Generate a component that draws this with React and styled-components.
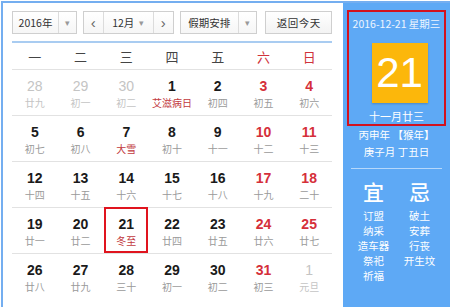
import styled, { createGlobalStyle } from "styled-components";

const GlobalStyle = createGlobalStyle`
  html, body {
    margin: 0;
    padding: 0;
    background: #fff;
  }
  body {
    padding: 1px 0 0 1px;
    font-family: "Liberation Sans", "Noto Sans CJK SC", sans-serif;
    overflow: hidden;
  }
`;

const days = [
  [
    { n: 28, l: "廿九", dim: true },
    { n: 29, l: "初一", dim: true },
    { n: 30, l: "初二", dim: true },
    { n: 1, l: "艾滋病日", fest: true },
    { n: 2, l: "初四" },
    { n: 3, l: "初五" },
    { n: 4, l: "初六" },
  ],
  [
    { n: 5, l: "初七" },
    { n: 6, l: "初八" },
    { n: 7, l: "大雪", fest: true },
    { n: 8, l: "初十" },
    { n: 9, l: "十一" },
    { n: 10, l: "十二" },
    { n: 11, l: "十三" },
  ],
  [
    { n: 12, l: "十四" },
    { n: 13, l: "十五" },
    { n: 14, l: "十六" },
    { n: 15, l: "十七" },
    { n: 16, l: "十八" },
    { n: 17, l: "十九" },
    { n: 18, l: "二十" },
  ],
  [
    { n: 19, l: "廿一" },
    { n: 20, l: "廿二" },
    { n: 21, l: "冬至", fest: true, selected: true },
    { n: 22, l: "廿四" },
    { n: 23, l: "廿五" },
    { n: 24, l: "廿六" },
    { n: 25, l: "廿七" },
  ],
  [
    { n: 26, l: "廿八" },
    { n: 27, l: "廿九" },
    { n: 28, l: "三十" },
    { n: 29, l: "初一" },
    { n: 30, l: "初二" },
    { n: 31, l: "初三" },
    { n: 1, l: "元旦", dim: true },
  ],
];

const weekdays = ["一", "二", "三", "四", "五", "六", "日"];

export default function App() {
  return (
    <>
      <GlobalStyle />
      <Frame>
        <Main>
          <Toolbar>
            <Select $w={66} $split={46}>
              <span>2016年</span>
              <Caret>▾</Caret>
            </Select>
            <Group>
              <Arrow>‹</Arrow>
              <MonthPick>
                12月 <Caret>▾</Caret>
              </MonthPick>
              <Arrow>›</Arrow>
            </Group>
            <Select $w={79} $split={58}>
              <span>假期安排</span>
              <Caret>▾</Caret>
            </Select>
            <TodayButton>返回今天</TodayButton>
          </Toolbar>
          <WeekHead>
            {weekdays.map((d, i) => (
              <WeekDay key={d} $weekend={i >= 5}>
                {d}
              </WeekDay>
            ))}
          </WeekHead>
          {days.map((row, r) => (
            <Row key={r}>
              {row.map((d, i) => (
                <Cell key={i} $selected={d.selected}>
                  <Num $dim={d.dim} $weekend={i >= 5}>
                    {d.n}
                  </Num>
                  <Lunar $dim={d.dim} $fest={d.fest}>
                    {d.l}
                  </Lunar>
                </Cell>
              ))}
            </Row>
          ))}
        </Main>
        <Side>
          <TodayBox>
            <DateLine>2016-12-21 星期三</DateLine>
            <BigDay>21</BigDay>
            <LunarDay>十一月廿三</LunarDay>
          </TodayBox>
          <GanZhi>丙申年 【猴年】</GanZhi>
          <GanZhi>庚子月 丁丑日</GanZhi>
          <Divider />
          <Advice>
            <AdviceCol>
              <AdviceTitle>宜</AdviceTitle>
              <span>订盟</span>
              <span>纳采</span>
              <span>造车器</span>
              <span>祭祀</span>
              <span>祈福</span>
            </AdviceCol>
            <AdviceCol>
              <AdviceTitle>忌</AdviceTitle>
              <span>破土</span>
              <span>安葬</span>
              <span>行丧</span>
              <span>开生坟</span>
            </AdviceCol>
          </Advice>
        </Side>
      </Frame>
    </>
  );
}

const Frame = styled.div`
  display: flex;
  width: 449px;
  height: 310px;
  box-sizing: border-box;
  border-top: 2px solid #74aef0;
  border-left: 2px solid #74aef0;
`;

const Main = styled.div`
  width: 340px;
  box-sizing: border-box;
  padding: 8px 11px 0 9px;
  background: #fff;
`;

const Toolbar = styled.div`
  display: flex;
  align-items: center;
  gap: 6px;
  height: 23px;
  padding-bottom: 7px;
  border-bottom: 2px solid #a9ccf1;
  font-family: "Noto Sans CJK SC", sans-serif;
  font-size: 10.5px;
  color: #333;
`;

const Select = styled.div`
  display: grid;
  grid-template-columns: ${(p) => p.$split}px 1fr;
  width: ${(p) => p.$w}px;
  height: 23px;
  box-sizing: border-box;
  border: 1px solid #cfcfcf;
  background: linear-gradient(#fff, #f6f6f6);

  & > * {
    display: flex;
    align-items: center;
    justify-content: center;
  }

  & > span:first-child {
    border-right: 1px solid #dcdcdc;
  }
`;

const Caret = styled.span`
  font-size: 9px;
  color: #999;
`;

const Group = styled.div`
  display: flex;
  height: 23px;
  box-sizing: border-box;
  border: 1px solid #cfcfcf;
  background: linear-gradient(#fff, #f6f6f6);
`;

const Arrow = styled.div`
  width: 19px;
  display: flex;
  align-items: center;
  justify-content: center;
  font-family: "Liberation Sans", sans-serif;
  font-size: 15px;
  color: #666;
`;

const MonthPick = styled.div`
  width: 49px;
  display: flex;
  align-items: center;
  justify-content: center;
  gap: 5px;
  border-left: 1px solid #dcdcdc;
  border-right: 1px solid #dcdcdc;
`;

const TodayButton = styled.div`
  width: 68px;
  height: 23px;
  margin-left: 2px;
  box-sizing: border-box;
  border: 1px solid #cfcfcf;
  background: linear-gradient(#fff, #f3f3f3);
  display: flex;
  align-items: center;
  justify-content: center;
  letter-spacing: 0.5px;
`;

const WeekHead = styled.div`
  display: grid;
  grid-template-columns: repeat(7, 1fr);
  height: 26px;
  align-items: center;
  border-bottom: 1px solid #e2e2e2;
  font-family: "Noto Sans CJK SC", sans-serif;
  font-size: 13px;
`;

const WeekDay = styled.div`
  text-align: center;
  color: ${(p) => (p.$weekend ? "#d0333b" : "#444")};
`;

const Row = styled.div`
  display: grid;
  grid-template-columns: repeat(7, 1fr);
  height: 46px;
  box-sizing: border-box;
  border-bottom: 1px solid #e2e2e2;

  &:last-child {
    border-bottom: none;
  }
`;

const Cell = styled.div`
  display: flex;
  flex-direction: column;
  align-items: center;
  padding-top: 8px;
  box-sizing: border-box;
  margin: ${(p) => (p.$selected ? "-1px 1px 0px 1px" : "0")};
  padding-top: ${(p) => (p.$selected ? "7px" : "8px")};
  border: ${(p) => (p.$selected ? "2px solid #e0141e" : "none")};
`;

const Num = styled.div`
  font-family: "Liberation Sans", sans-serif;
  font-weight: bold;
  font-size: 14px;
  line-height: 17px;
  color: ${(p) => (p.$dim ? "#c4c4c4" : p.$weekend ? "#d52f3a" : "#1a1a1a")};
  ${(p) => p.$dim && "font-weight: normal;"}
`;

const Lunar = styled.div`
  font-family: "Noto Sans CJK SC", sans-serif;
  font-size: 10px;
  line-height: 14px;
  margin-top: 1px;
  color: ${(p) => (p.$fest ? "#c23a3e" : p.$dim ? "#c4c4c4" : "#9a9a9a")};
`;

const Side = styled.div`
  flex: 1;
  display: flex;
  flex-direction: column;
  align-items: center;
  background: #5ea9f5;
  font-family: "Noto Sans CJK SC", sans-serif;
  color: #fff;
`;

const TodayBox = styled.div`
  width: 99px;
  height: 116px;
  margin-top: 7px;
  box-sizing: border-box;
  border: 2px solid #d3121f;
  display: flex;
  flex-direction: column;
  align-items: center;
`;

const DateLine = styled.div`
  margin-top: 5px;
  font-size: 10.5px;
  line-height: 13px;
  color: #eef5ff;
  white-space: nowrap;
`;

const BigDay = styled.div`
  width: 56px;
  height: 60px;
  margin-top: 13px;
  margin-left: 6px;
  background: #fcb70b;
  box-shadow: 0 1px 2px rgba(0, 0, 0, 0.2);
  display: flex;
  align-items: center;
  justify-content: center;
  font-family: "Liberation Sans", sans-serif;
  font-size: 42px;
  color: #fff;
`;

const LunarDay = styled.div`
  margin-top: 6px;
  font-size: 11px;
  line-height: 14px;
`;

const GanZhi = styled.div`
  font-size: 10.5px;
  line-height: 17px;
  white-space: nowrap;
  &:first-of-type {
    margin-top: 1px;
  }
`;

const Divider = styled.div`
  width: 91px;
  height: 1px;
  margin-top: 8px;
  background: rgba(255, 255, 255, 0.55);
`;

const Advice = styled.div`
  display: flex;
  gap: 14px;
  margin-top: 10px;
`;

const AdviceCol = styled.div`
  width: 32px;
  display: flex;
  flex-direction: column;
  align-items: center;
  font-size: 10.5px;
  line-height: 15px;
  white-space: nowrap;
`;

const AdviceTitle = styled.div`
  font-size: 21px;
  font-weight: 500;
  line-height: 24px;
  margin-bottom: 5px;
`;
